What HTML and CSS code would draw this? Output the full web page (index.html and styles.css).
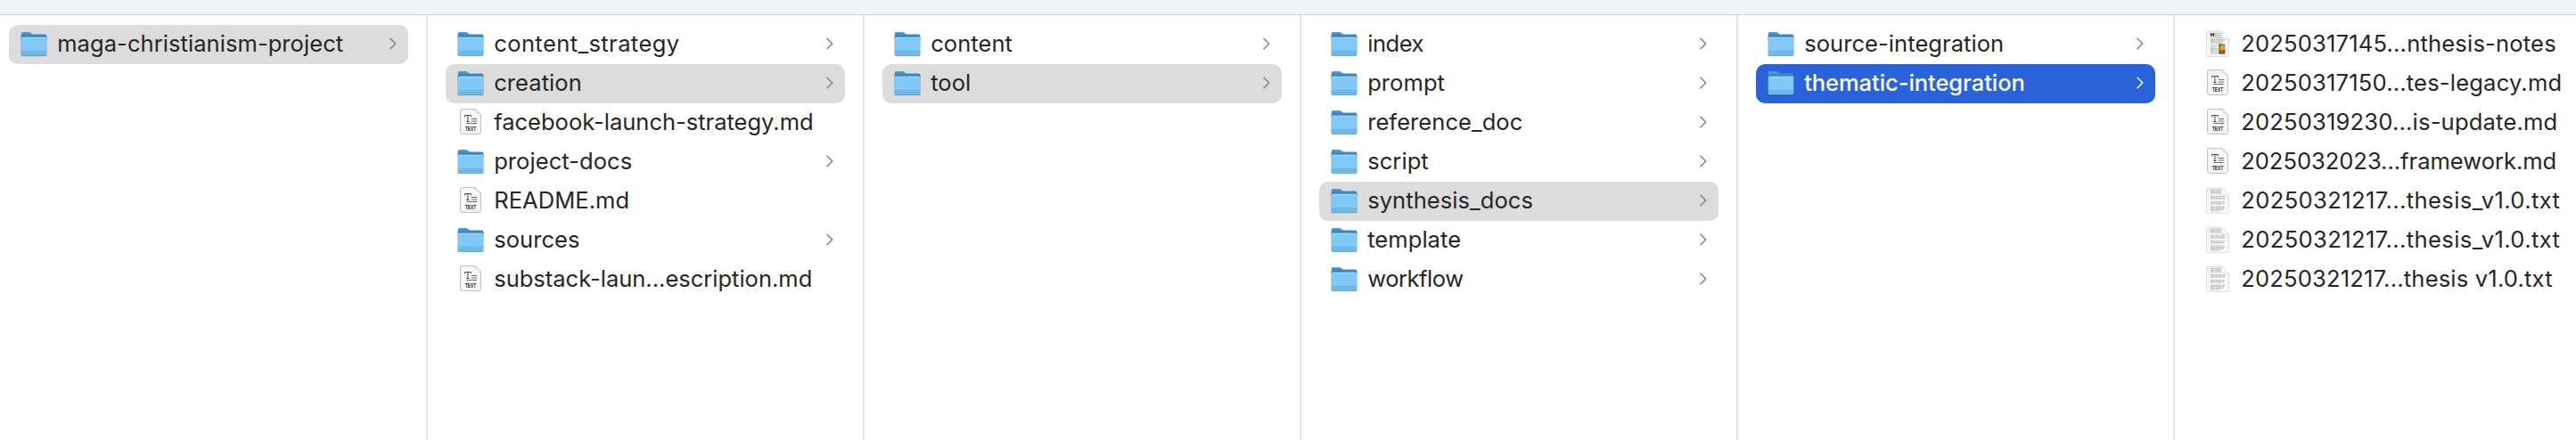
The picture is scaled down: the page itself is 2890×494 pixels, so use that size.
FILE: index.html
```
<!DOCTYPE html>
<html lang="en">
<head>
<meta charset="utf-8">
<title>maga-christianism-project</title>
<link rel="stylesheet" href="styles.css">
</head>
<body>
<svg class="sprite" aria-hidden="true">
  <defs>
    <linearGradient id="tab" x1="0" y1="0" x2="0" y2="1"><stop offset="0" stop-color="#51a0d8"/><stop offset=".7" stop-color="#3279bb"/></linearGradient>
    <linearGradient id="front" x1="0" y1="0" x2="0" y2="1"><stop offset="0" stop-color="#8fd2fa"/><stop offset=".12" stop-color="#80caf7"/><stop offset=".72" stop-color="#80c9f6"/><stop offset="1" stop-color="#6bb7e9"/></linearGradient>
    <linearGradient id="paper" x1="0" y1="0" x2="0" y2="1"><stop offset="0" stop-color="#efefef"/><stop offset="1" stop-color="#fafafa"/></linearGradient>
  </defs>
  <symbol id="folder" viewBox="0 0 32 32">
    <rect x="1.2" y="6" width="29.6" height="23.6" rx="2" fill="#000" opacity=".1"/>
    <rect x="1.7" y="6" width="28.6" height="23" rx="1.6" fill="#3b6888" opacity=".55"/>
    <path d="M1.7 9V3.8Q1.7 2 3.5 2h7.3q1 0 1.7.7l1.2 1.1q.8.8 2 .8h13q1.6 0 1.6 1.7V10H1.7z" fill="url(#tab)"/>
    <rect x="1.7" y="7.8" width="28.6" height="20.4" rx="1.5" fill="url(#front)"/>
    <path d="M2.3 8.2h27.4" stroke="#a3dcfb" stroke-width=".8"/>
    <path d="M2 23.5h28M2 25.5h28" stroke="#5aa6da" stroke-width=".8" opacity=".75"/>
  </symbol>
  <symbol id="md" viewBox="0 0 32 32">
    <path d="M6.5.6h13.6q1.2 0 2 .8l4.5 4.5q.8.8.8 2v18.6q0 1.9-1.9 1.9H6.5q-1.9 0-1.9-1.9V2.5Q4.6.6 6.5.6z" fill="#f8f8f8" stroke="#bababa"/>
    <path d="M20 1q1.8 3 3.3 3.4T27 8.3" fill="none" stroke="#c9c9c9" stroke-width=".7"/>
    <path d="M9.500 9.300V7.500h6.800v1.800M12.900 7.500v7M11.200 14.500h3.400" fill="none" stroke="#4a4a4a" stroke-width="1"/>
    <path d="M16.700 11.500h6.500M16.700 14h6.500M11.500 16.500h11.700" stroke="#5d5d5d" stroke-width=".9"/>
    <text x="10" y="24.800" textLength="12" lengthAdjust="spacingAndGlyphs" class="badge">TEXT</text>
  </symbol>
  <symbol id="sheet" viewBox="0 0 32 32">
    <path d="M5 1.200H20.300L29.100 9V28q0 2.200-2.200 2.200H5.100Q2.900 30.200 2.900 28V3.400Q2.900 1.200 5 1.200z" fill="#000" opacity=".07"/>
    <path d="M5.500.8H20.300L28.400 9V27.200q0 2-2 2H5.600q-2 0-2-2V2.800q0-2 1.900-2z" fill="url(#paper)" stroke="#000" stroke-opacity=".13" stroke-width=".6"/>
    <path d="M20.300.8V6.900q0 2 2 2h6.100z" fill="#fdfdfd" stroke="#ccc" stroke-width=".6"/>
  </symbol>
  <symbol id="txt" viewBox="0 0 32 32">
    <use href="#sheet" width="32" height="32"/>
    <g fill="none" stroke="#bababa" stroke-width="1.2" stroke-dasharray="3 .5 1.5 .4 2.3 .5">
      <path d="M8 3.300h11.500M8 5.300h11.500M8 7h12M8 10.800h16M8 12.800h16M8 16.800h16M8 18.600h14.500M8 22h16M8 23.700h15.500M8 25.400h15M8 27h10"/>
    </g>
  </symbol>
  <symbol id="rich" viewBox="0 0 32 32">
    <use href="#sheet" width="32" height="32"/>
    <path d="M8.600 3v4M11.600 3v4M8.600 5h3" stroke="#333" stroke-width="1.3"/>
    <g fill="none" stroke="#b4b4b4" stroke-width="1.1" stroke-dasharray="3 .5 1.5 .4 2.3 .5">
      <path d="M13.200 3.500h6M13.200 5.200h6M13.200 7h6.500M8 8.800h14M8 10.600h15.500M8 12.400h14M8 14.200h14M8 17h8M8 18.800h7M8 20.600h8M8 22.400h7.500M8 24.200h8M8 26h7.500"/>
    </g>
    <path d="M17 15.500h7.200v11H17z" fill="#b9722c"/>
    <path d="M17 15.500h4l-1 2-3 1z" fill="#6b7a3a"/>
    <path d="M19 18l3-1.500 2 2-.5 3-3 1.500-2-2z" fill="#efa02c"/>
    <path d="M17 22l3 1.500 4.200-1.500v4.500H17z" fill="#587038"/>
    <path d="M20.500 22.500l2-1 1 2-2 1z" fill="#c8442a"/>
  </symbol>
  <symbol id="chev" viewBox="0 0 8 14"><path d="M1 1.300 6.700 7 1 12.700" fill="none" stroke="currentColor" stroke-width="1.6" stroke-linecap="round" stroke-linejoin="round"/></symbol>
</svg>
<div class="toolbar"></div>
<main class="columns">
  <ul class="column first">
    <li class="row open"><svg class="icon"><use href="#folder"/></svg><span class="name">maga-christianism-project</span><svg class="chev"><use href="#chev"/></svg></li>
  </ul>
  <ul class="column">
    <li class="row"><svg class="icon"><use href="#folder"/></svg><span class="name loose">content_strategy</span><svg class="chev"><use href="#chev"/></svg></li>
    <li class="row open"><svg class="icon"><use href="#folder"/></svg><span class="name">creation</span><svg class="chev"><use href="#chev"/></svg></li>
    <li class="row"><svg class="icon"><use href="#md"/></svg><span class="name flat">facebook-launch-strategy.md</span></li>
    <li class="row"><svg class="icon"><use href="#folder"/></svg><span class="name">project-docs</span><svg class="chev"><use href="#chev"/></svg></li>
    <li class="row"><svg class="icon"><use href="#md"/></svg><span class="name">README.md</span></li>
    <li class="row"><svg class="icon"><use href="#folder"/></svg><span class="name">sources</span><svg class="chev"><use href="#chev"/></svg></li>
    <li class="row"><svg class="icon"><use href="#md"/></svg><span class="name flat">substack-laun...escription.md</span></li>
  </ul>
  <ul class="column">
    <li class="row"><svg class="icon"><use href="#folder"/></svg><span class="name">content</span><svg class="chev"><use href="#chev"/></svg></li>
    <li class="row open"><svg class="icon"><use href="#folder"/></svg><span class="name">tool</span><svg class="chev"><use href="#chev"/></svg></li>
  </ul>
  <ul class="column">
    <li class="row"><svg class="icon"><use href="#folder"/></svg><span class="name tight">index</span><svg class="chev"><use href="#chev"/></svg></li>
    <li class="row"><svg class="icon"><use href="#folder"/></svg><span class="name">prompt</span><svg class="chev"><use href="#chev"/></svg></li>
    <li class="row"><svg class="icon"><use href="#folder"/></svg><span class="name">reference_doc</span><svg class="chev"><use href="#chev"/></svg></li>
    <li class="row"><svg class="icon"><use href="#folder"/></svg><span class="name">script</span><svg class="chev"><use href="#chev"/></svg></li>
    <li class="row open"><svg class="icon"><use href="#folder"/></svg><span class="name">synthesis_docs</span><svg class="chev"><use href="#chev"/></svg></li>
    <li class="row"><svg class="icon"><use href="#folder"/></svg><span class="name">template</span><svg class="chev"><use href="#chev"/></svg></li>
    <li class="row"><svg class="icon"><use href="#folder"/></svg><span class="name tight">workflow</span><svg class="chev"><use href="#chev"/></svg></li>
  </ul>
  <ul class="column">
    <li class="row"><svg class="icon"><use href="#folder"/></svg><span class="name">source-integration</span><svg class="chev"><use href="#chev"/></svg></li>
    <li class="row active"><svg class="icon"><use href="#folder"/></svg><span class="name">thematic-integration</span><svg class="chev"><use href="#chev"/></svg></li>
  </ul>
  <ul class="column">
    <li class="row"><svg class="icon"><use href="#rich"/></svg><span class="name wide">20250317145...nthesis-notes</span></li>
    <li class="row"><svg class="icon"><use href="#md"/></svg><span class="name wide">20250317150...tes-legacy.md</span></li>
    <li class="row"><svg class="icon"><use href="#md"/></svg><span class="name wide">20250319230...is-update.md</span></li>
    <li class="row"><svg class="icon"><use href="#md"/></svg><span class="name flat">2025032023...framework.md</span></li>
    <li class="row"><svg class="icon"><use href="#txt"/></svg><span class="name loose">20250321217...thesis_v1.0.txt</span></li>
    <li class="row"><svg class="icon"><use href="#txt"/></svg><span class="name loose">20250321217...thesis_v1.0.txt</span></li>
    <li class="row"><svg class="icon"><use href="#txt"/></svg><span class="name wide">20250321217...thesis v1.0.txt</span></li>
  </ul>
</main>
</body>
</html>
```
FILE: styles.css
```
* { box-sizing: border-box; }

body {
  margin: 0;
  height: 494px;
  display: flex;
  flex-direction: column;
  overflow: hidden;
  background: #fff;
  color: #262626;
  font-family: Inter, "Liberation Sans", sans-serif;
  font-size: 25.5px;
}

.sprite { position: absolute; width: 40px; height: 40px; }

.badge {
  font-family: "Liberation Sans", sans-serif;
  font-size: 6.6px;
  font-weight: 700;
  fill: #222;
}

.toolbar {
  flex: none;
  height: 17px;
  background: #f3f4f6;
  border-bottom: 1px solid #d3d3d3;
}

.columns { flex: 1; display: flex; }

.column {
  flex: none;
  width: 490px;
  margin: 0;
  padding: 11px 20px 0;
  border-right: 2px solid #e3e3e3;
  list-style: none;
}

.column.first { width: 480px; padding-left: 10px; }

.row {
  display: flex;
  align-items: center;
  height: 44px;
  padding: 0 13px 0 12px;
  border-radius: 10px;
}

.row.open { background: #dcdcdc; }
.row.active { background: #2962d9; color: #fff; }

.icon { flex: none; width: 32px; height: 32px; }

.name {
  flex: 1;
  margin-left: 10.2px;
  padding-bottom: 2px;
  line-height: 42px;
  letter-spacing: .07px;
  white-space: nowrap;
}

.name.flat { letter-spacing: 0; }
.name.wide { letter-spacing: .21px; }
.name.loose { letter-spacing: .42px; }
.name.tight { letter-spacing: -.45px; }

.chev { flex: none; width: 8px; height: 14px; margin-bottom: 2px; color: #858585; }
.active .chev { color: #fff; }
.active .name { font-weight: 500; letter-spacing: -.06px; }
```
